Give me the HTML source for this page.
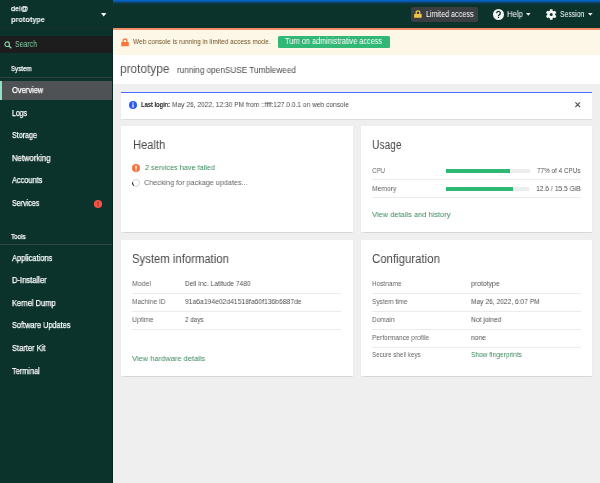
<!DOCTYPE html>
<html><head><meta charset="utf-8"><style>
html,body{margin:0;padding:0;width:600px;height:483px;overflow:hidden;background:#efefef;font-family:"Liberation Sans",sans-serif;}
.b{position:absolute;}
.t{position:absolute;white-space:nowrap;transform-origin:0 0;will-change:transform;}
.i{position:absolute;overflow:visible;}
</style></head><body>
<div class="b" style="left:0px;top:0px;width:113px;height:483px;background:#0c322c"></div>
<div class="b" style="left:0px;top:28px;width:113px;height:1px;background:#1f2f2b"></div>
<div class="b" style="left:0px;top:36px;width:113px;height:16.7px;background:#1d1d1e"></div>
<div class="b" style="left:0px;top:77px;width:113px;height:1px;background:#2f423e"></div>
<div class="b" style="left:0px;top:81px;width:113px;height:19px;background:#4f5255"></div>
<div class="b" style="left:0px;top:81px;width:2px;height:19px;background:#8ce4c2"></div>
<div class="b" style="left:0px;top:244px;width:113px;height:1px;background:#34463f"></div>
<div class="b" style="left:112px;top:28px;width:1px;height:455px;background:#082520"></div>
<div class="b" style="left:113px;top:0px;width:487px;height:28px;background:linear-gradient(to bottom,#0066cc 0px,#0a55a8 1.5px,#0c3a4a 3px,#0c322c 5px)"></div>
<div class="b" style="left:410.5px;top:7px;width:67px;height:15px;background:#3c3f42;border-radius:2px"></div>
<div class="b" style="left:113px;top:28px;width:487px;height:26.5px;background:#fdf7e7;border-top:2px solid #f39068;box-sizing:border-box"></div>
<div class="b" style="left:278px;top:35.5px;width:112px;height:12.6px;background:#31b776;border-radius:1.5px"></div>
<div class="b" style="left:113px;top:54.5px;width:487px;height:29.5px;background:#ffffff"></div>
<div class="b" style="left:121px;top:92px;width:471px;height:27px;background:#fff;border-top:1.5px solid #4a6cff;box-sizing:border-box;box-shadow:0 0.5px 1px rgba(0,0,0,0.08)"></div>
<div class="b" style="left:121px;top:126px;width:232px;height:106px;background:#fff;box-shadow:0 0.8px 1px rgba(0,0,0,0.10)"></div>
<div class="b" style="left:361px;top:126px;width:231px;height:106px;background:#fff;box-shadow:0 0.8px 1px rgba(0,0,0,0.10)"></div>
<div class="b" style="left:121px;top:240px;width:232px;height:136px;background:#fff;box-shadow:0 0.8px 1px rgba(0,0,0,0.10)"></div>
<div class="b" style="left:361px;top:240px;width:231px;height:136px;background:#fff;box-shadow:0 0.8px 1px rgba(0,0,0,0.10)"></div>
<div class="b" style="left:372px;top:179px;width:209px;height:1px;background:#ebebeb"></div>
<div class="b" style="left:372px;top:197px;width:209px;height:1px;background:#ebebeb"></div>
<div class="b" style="left:446px;top:169.2px;width:84px;height:3.7px;background:#ededed"></div>
<div class="b" style="left:446px;top:169.2px;width:64px;height:3.7px;background:#2fb874"></div>
<div class="b" style="left:446px;top:187px;width:83px;height:3.8px;background:#ededed"></div>
<div class="b" style="left:446px;top:187px;width:67.3px;height:3.8px;background:#2fb874"></div>
<div class="b" style="left:132px;top:293px;width:209px;height:1px;background:#ebebeb"></div>
<div class="b" style="left:132px;top:311px;width:209px;height:1px;background:#ebebeb"></div>
<div class="b" style="left:132px;top:329px;width:209px;height:1px;background:#ebebeb"></div>
<div class="b" style="left:372px;top:293px;width:209px;height:1px;background:#ebebeb"></div>
<div class="b" style="left:372px;top:311px;width:209px;height:1px;background:#ebebeb"></div>
<div class="b" style="left:372px;top:329px;width:209px;height:1px;background:#ebebeb"></div>
<div class="b" style="left:372px;top:346.5px;width:209px;height:1px;background:#ebebeb"></div>
<div class="t" style="left:11.00px;top:5.01px;font-size:7.8px;line-height:7.8px;color:#ffffff;transform:scaleX(0.9274);-webkit-text-stroke:0.25px #fff;">dei@</div>
<div class="t" style="left:11.00px;top:16.01px;font-size:7.8px;line-height:7.8px;color:#ffffff;transform:scaleX(0.9453);font-weight:bold;">prototype</div>
<div class="t" style="left:15.00px;top:41.01px;font-size:8.2px;line-height:8.2px;color:#82cfa8;transform:scaleX(0.8469);">Search</div>
<div class="t" style="left:11.30px;top:65.01px;font-size:7.2px;line-height:7.2px;color:#ffffff;transform:scaleX(0.8582);-webkit-text-stroke:0.25px #fff;">System</div>
<div class="t" style="left:11.30px;top:233.01px;font-size:7.2px;line-height:7.2px;color:#ffffff;transform:scaleX(0.8688);-webkit-text-stroke:0.25px #fff;">Tools</div>
<div class="t" style="left:11.60px;top:86.01px;font-size:8.4px;line-height:8.4px;color:#ffffff;transform:scaleX(0.8936);-webkit-text-stroke:0.25px #fff;">Overview</div>
<div class="t" style="left:11.60px;top:109.01px;font-size:8.4px;line-height:8.4px;color:#ffffff;transform:scaleX(0.8237);-webkit-text-stroke:0.25px #fff;">Logs</div>
<div class="t" style="left:11.60px;top:131.01px;font-size:8.4px;line-height:8.4px;color:#ffffff;transform:scaleX(0.8499);-webkit-text-stroke:0.25px #fff;">Storage</div>
<div class="t" style="left:11.60px;top:154.01px;font-size:8.4px;line-height:8.4px;color:#ffffff;transform:scaleX(0.9187);-webkit-text-stroke:0.25px #fff;">Networking</div>
<div class="t" style="left:11.60px;top:176.01px;font-size:8.4px;line-height:8.4px;color:#ffffff;transform:scaleX(0.8799);-webkit-text-stroke:0.25px #fff;">Accounts</div>
<div class="t" style="left:11.60px;top:199.01px;font-size:8.4px;line-height:8.4px;color:#ffffff;transform:scaleX(0.8506);-webkit-text-stroke:0.25px #fff;">Services</div>
<div class="t" style="left:11.60px;top:254.01px;font-size:8.4px;line-height:8.4px;color:#ffffff;transform:scaleX(0.8920);-webkit-text-stroke:0.25px #fff;">Applications</div>
<div class="t" style="left:11.60px;top:276.01px;font-size:8.4px;line-height:8.4px;color:#ffffff;transform:scaleX(0.9091);-webkit-text-stroke:0.25px #fff;">D-Installer</div>
<div class="t" style="left:11.60px;top:299.01px;font-size:8.4px;line-height:8.4px;color:#ffffff;transform:scaleX(0.8894);-webkit-text-stroke:0.25px #fff;">Kernel Dump</div>
<div class="t" style="left:11.60px;top:321.01px;font-size:8.4px;line-height:8.4px;color:#ffffff;transform:scaleX(0.8761);-webkit-text-stroke:0.25px #fff;">Software Updates</div>
<div class="t" style="left:11.60px;top:344.01px;font-size:8.4px;line-height:8.4px;color:#ffffff;transform:scaleX(0.8970);-webkit-text-stroke:0.25px #fff;">Starter Kit</div>
<div class="t" style="left:11.60px;top:367.01px;font-size:8.4px;line-height:8.4px;color:#ffffff;transform:scaleX(0.8758);-webkit-text-stroke:0.25px #fff;">Terminal</div>
<div class="t" style="left:425.50px;top:10.01px;font-size:8.6px;line-height:8.6px;color:#ffffff;transform:scaleX(0.8351);">Limited access</div>
<div class="t" style="left:506.60px;top:10.01px;font-size:8.6px;line-height:8.6px;color:#ffffff;transform:scaleX(0.8931);">Help</div>
<div class="t" style="left:559.60px;top:10.01px;font-size:8.6px;line-height:8.6px;color:#ffffff;transform:scaleX(0.7974);">Session</div>
<div class="t" style="left:132.80px;top:38.01px;font-size:7.7px;line-height:7.7px;color:#6e5226;transform:scaleX(0.8497);">Web console is running in limited access mode.</div>
<div class="t" style="left:285.20px;top:38.01px;font-size:8.2px;line-height:8.2px;color:#ffffff;transform:scaleX(0.8949);">Turn on administrative access</div>
<div class="t" style="left:120.30px;top:63.01px;font-size:12.5px;line-height:12.5px;color:#555555;transform:scaleX(0.9479);">prototype</div>
<div class="t" style="left:177.30px;top:66.01px;font-size:8.6px;line-height:8.6px;color:#4a4a4a;transform:scaleX(0.9537);">running openSUSE Tumbleweed</div>
<div class="t" style="left:140.90px;top:101.01px;font-size:7.8px;line-height:7.8px;color:#151515;transform:scaleX(0.7380);font-weight:bold;">Last login:</div>
<div class="t" style="left:172.20px;top:101.01px;font-size:7.8px;line-height:7.8px;color:#4a4a4a;transform:scaleX(0.8482);">May 26, 2022, 12:30 PM from ::ffff:127.0.0.1 on web console</div>
<div class="t" style="left:132.50px;top:139.01px;font-size:12px;line-height:12px;color:#474747;transform:scaleX(0.9282);">Health</div>
<div class="t" style="left:145.30px;top:164.01px;font-size:7.9px;line-height:7.9px;color:#3a8a5c;transform:scaleX(0.9215);">2 services have failed</div>
<div class="t" style="left:143.60px;top:179.01px;font-size:7.8px;line-height:7.8px;color:#646464;transform:scaleX(0.9261);">Checking for package updates...</div>
<div class="t" style="left:371.80px;top:139.01px;font-size:12px;line-height:12px;color:#474747;transform:scaleX(0.8532);">Usage</div>
<div class="t" style="left:371.80px;top:167.01px;font-size:7.8px;line-height:7.8px;color:#646464;transform:scaleX(0.7895);">CPU</div>
<div class="t" style="left:371.80px;top:185.01px;font-size:7.8px;line-height:7.8px;color:#646464;transform:scaleX(0.8663);">Memory</div>
<div class="t" style="left:537.30px;top:167.01px;font-size:7.8px;line-height:7.8px;color:#505050;transform:scaleX(0.8158);">77% of 4 CPUs</div>
<div class="t" style="left:536.00px;top:185.01px;font-size:7.8px;line-height:7.8px;color:#505050;transform:scaleX(0.8610);">12.6 / 15.5 GiB</div>
<div class="t" style="left:371.80px;top:211.01px;font-size:7.9px;line-height:7.9px;color:#3a8a5c;transform:scaleX(0.9487);">View details and history</div>
<div class="t" style="left:131.70px;top:253.01px;font-size:12px;line-height:12px;color:#474747;transform:scaleX(0.9435);">System information</div>
<div class="t" style="left:131.80px;top:280.01px;font-size:7.8px;line-height:7.8px;color:#646464;transform:scaleX(0.8895);">Model</div>
<div class="t" style="left:185.40px;top:280.01px;font-size:7.8px;line-height:7.8px;color:#505050;transform:scaleX(0.8452);">Dell Inc. Latitude 7480</div>
<div class="t" style="left:131.80px;top:298.01px;font-size:7.8px;line-height:7.8px;color:#646464;transform:scaleX(0.8517);">Machine ID</div>
<div class="t" style="left:185.40px;top:298.01px;font-size:7.8px;line-height:7.8px;color:#505050;transform:scaleX(0.8671);">91a6a194e02d41518fa60f136b6887de</div>
<div class="t" style="left:131.80px;top:316.01px;font-size:7.8px;line-height:7.8px;color:#646464;transform:scaleX(0.8782);">Uptime</div>
<div class="t" style="left:185.40px;top:316.01px;font-size:7.8px;line-height:7.8px;color:#505050;transform:scaleX(0.8051);">2 days</div>
<div class="t" style="left:131.70px;top:355.01px;font-size:7.9px;line-height:7.9px;color:#3a8a5c;transform:scaleX(0.9502);">View hardware details</div>
<div class="t" style="left:371.70px;top:253.01px;font-size:12px;line-height:12px;color:#474747;transform:scaleX(0.9513);">Configuration</div>
<div class="t" style="left:371.80px;top:280.01px;font-size:7.8px;line-height:7.8px;color:#646464;transform:scaleX(0.8298);">Hostname</div>
<div class="t" style="left:471.10px;top:280.01px;font-size:7.8px;line-height:7.8px;color:#505050;transform:scaleX(0.8795);">prototype</div>
<div class="t" style="left:371.80px;top:298.01px;font-size:7.8px;line-height:7.8px;color:#646464;transform:scaleX(0.8274);">System time</div>
<div class="t" style="left:471.10px;top:298.01px;font-size:7.8px;line-height:7.8px;color:#505050;transform:scaleX(0.8519);">May 26, 2022, 6:07 PM</div>
<div class="t" style="left:371.80px;top:316.01px;font-size:7.8px;line-height:7.8px;color:#646464;transform:scaleX(0.8371);">Domain</div>
<div class="t" style="left:471.10px;top:316.01px;font-size:7.8px;line-height:7.8px;color:#505050;transform:scaleX(0.8627);">Not joined</div>
<div class="t" style="left:371.80px;top:334.01px;font-size:7.8px;line-height:7.8px;color:#646464;transform:scaleX(0.8389);">Performance profile</div>
<div class="t" style="left:471.10px;top:334.01px;font-size:7.8px;line-height:7.8px;color:#505050;transform:scaleX(0.8585);">none</div>
<div class="t" style="left:371.80px;top:351.01px;font-size:7.8px;line-height:7.8px;color:#646464;transform:scaleX(0.7950);">Secure shell keys</div>
<div class="t" style="left:471.10px;top:351.01px;font-size:7.8px;line-height:7.8px;color:#3a8a5c;transform:scaleX(0.8446);">Show fingerprints</div>
<svg class="i" style="left:100.8px;top:12.8px" width="6" height="4"><path d="M0 0H5.4L2.7 3.4Z" fill="#fff"/></svg>
<svg class="i" style="left:3.5px;top:40.6px" width="8" height="8" viewBox="0 0 8 8"><circle cx="3.2" cy="3.2" r="2.3" fill="none" stroke="#82cfa8" stroke-width="1.2"/><path d="M4.9 4.9L7.3 7.3" stroke="#82cfa8" stroke-width="1.4"/></svg>
<svg class="i" style="left:94px;top:199.5px" width="8" height="8" viewBox="0 0 8 8"><circle cx="4" cy="4" r="4.1" fill="#f5524a"/><rect x="3.4" y="1.8" width="1.2" height="2.8" fill="#8a3a33"/><rect x="3.4" y="5.2" width="1.2" height="1" fill="#8a3a33"/></svg>
<svg class="i" style="left:414.2px;top:10px" width="8" height="8" viewBox="0 0 8 8"><path d="M2.2 4.2V2.6A1.8 1.8 0 0 1 5.8 2.6V4.2" fill="none" stroke="#f2c443" stroke-width="1.3"/><rect x="0.1" y="4" width="7.6" height="3.8" rx="0.4" fill="#f2c443"/></svg>
<svg class="i" style="left:492.5px;top:9.3px" width="11" height="11" viewBox="0 0 11 11"><circle cx="5.5" cy="5.5" r="5.5" fill="#f5f5f5"/><path d="M3.7 4.2A1.8 1.8 0 1 1 6.2 5.8C5.6 6.1 5.5 6.4 5.5 7" fill="none" stroke="#0c322c" stroke-width="1.3"/><rect x="4.85" y="7.7" width="1.3" height="1.3" fill="#0c322c"/></svg>
<svg class="i" style="left:526px;top:13.2px" width="5" height="3"><path d="M0 0H4.6L2.3 2.8Z" fill="#f0f0f0"/></svg>
<svg class="i" style="left:545.7px;top:9px" width="11" height="11" viewBox="0 0 11 11"><path d="M3.77,1.72 L3.88,0.16 L6.52,0.16 L6.63,1.72 L7.72,2.34 L9.12,1.66 L10.44,3.95 L9.15,4.82 L9.15,6.08 L10.44,6.95 L9.12,9.24 L7.72,8.56 L6.63,9.18 L6.52,10.74 L3.88,10.74 L3.77,9.18 L2.68,8.56 L1.28,9.24 L-0.04,6.95 L1.25,6.08 L1.25,4.82 L-0.04,3.95 L1.28,1.66 L2.68,2.34Z M5.2 3.95A1.5 1.5 0 1 0 5.2 6.95A1.5 1.5 0 1 0 5.2 3.95Z" fill="#f5f5f5" fill-rule="evenodd"/></svg>
<svg class="i" style="left:588px;top:13.2px" width="5" height="3"><path d="M0 0H4.6L2.3 2.8Z" fill="#f0f0f0"/></svg>
<svg class="i" style="left:120.8px;top:37.5px" width="8" height="9" viewBox="0 0 8 9"><path d="M2.1 4.2V2.9A1.9 1.9 0 0 1 5.9 2.9V4.2" fill="none" stroke="#f7773f" stroke-width="1.3"/><rect x="0.2" y="4" width="7.6" height="4.3" rx="0.6" fill="#f7773f"/></svg>
<svg class="i" style="left:128.5px;top:101px" width="8" height="8" viewBox="0 0 8 8"><circle cx="4" cy="4" r="4" fill="#2b5bf0"/><rect x="3.4" y="3.3" width="1.25" height="3.2" fill="#fff"/><circle cx="4.02" cy="2.1" r="0.75" fill="#fff"/></svg>
<svg class="i" style="left:574.8px;top:102.1px" width="5.4" height="5.4" viewBox="0 0 5.4 5.4"><path d="M0.4 0.4L5 5M5 0.4L0.4 5" stroke="#555" stroke-width="1.1"/></svg>
<svg class="i" style="left:132.4px;top:163.8px" width="8" height="8" viewBox="0 0 8 8"><circle cx="4" cy="4" r="4" fill="#f4743c"/><rect x="3.35" y="1.6" width="1.3" height="3.2" rx="0.3" fill="#fff"/><rect x="3.35" y="5.4" width="1.3" height="1.1" fill="#fff"/></svg>
<svg class="i" style="left:131.8px;top:178.8px" width="8" height="8" viewBox="0 0 8 8"><circle cx="4" cy="4" r="3.5" fill="none" stroke="#c4c4c4" stroke-width="0.8"/><path d="M1.75 6.68A3.5 3.5 0 0 1 0.55 3.39" fill="none" stroke="#222" stroke-width="1.1"/></svg>
</body></html>
